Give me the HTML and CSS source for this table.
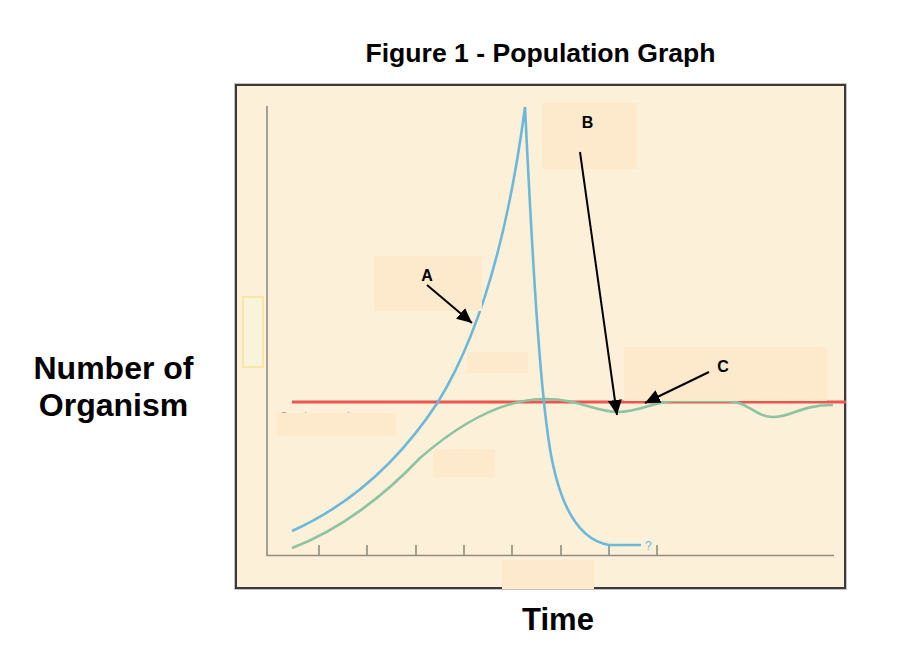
FILE: index.html
```html
<!DOCTYPE html>
<html lang="en">
<head>
<meta charset="utf-8">
<title>Figure 1 - Population Graph</title>
<link rel="stylesheet" href="styles.css">
</head>
<body>
<div class="page">
  <h1 class="title">Figure 1 - Population Graph</h1>
  <div class="ylabel">Number of<br>Organism</div>
  <div class="frame">
    <svg class="chart" width="607" height="501" viewBox="237 86 607 501" xmlns="http://www.w3.org/2000/svg">
      <defs>
        <marker id="head" markerUnits="userSpaceOnUse" markerWidth="16" markerHeight="14" refX="15" refY="7" orient="auto">
          <path d="M0,0 L15,7 L0,14 z" class="head"/>
        </marker>
      </defs>
      <!-- axes -->
      <path class="axis" d="M267,106 V555.5 H834"/>
      <path class="axis" d="M319,545 V555 M367,545 V555 M416,545 V555 M464,545 V555 M512,545 V555 M561,545 V555 M609,545 V555 M657,545 V555"/>
      <!-- faint label under box -->
      <text class="faint" x="280" y="420">Carrying capacity</text>
      <!-- carrying capacity line -->
      <path class="red" d="M292,402 H846"/>
      <!-- green logistic curve -->
      <path class="green" d="M292,548 C340,530 385,495 420,458 C458,425 500,399 545,399 C580,399 595,412 618,412 C640,412 655,401 675,401 L727,401 C748,401 755,417 773,417 C792,417 800,405 833,405"/>
      <!-- blue exponential curve -->
      <path class="blue" d="M292,531 C350,505 400,460 438,402 C470,350 505,260 525,107 C532,250 540,400 552,460 C562,510 580,540 609,545 L641,545"/>
      <text class="qmark" x="645" y="550">?</text>
      <!-- label boxes -->
      <rect class="box" x="374" y="256" width="108" height="55"/>
      <rect class="box" x="542" y="103" width="95" height="66"/>
      <rect class="box" x="624" y="347" width="203" height="54"/>
      <rect class="box" x="467" y="352" width="61" height="21"/>
      <rect class="box" x="277" y="413" width="119" height="23"/>
      <rect class="box" x="433" y="449" width="62" height="28"/>
      <rect class="box" x="502" y="560" width="92" height="29"/>
      <rect class="ybox" x="243" y="297" width="20" height="70"/>
      <!-- letters -->
      <text class="letter" x="427" y="281">A</text>
      <text class="letter" x="587.5" y="128">B</text>
      <text class="letter" x="723" y="372">C</text>
      <!-- arrows -->
      <path class="arrow" d="M427,285 L472,323"/>
      <path class="arrow" d="M580,152 L617,415"/>
      <path class="arrow" d="M709,372 L645,403"/>
    </svg>
  </div>
  <div class="xlabel">Time</div>
</div>
</body>
</html>
```

FILE: styles.css
```css
html, body {
  margin: 0;
  padding: 0;
  background: #ffffff;
}

body {
  width: 924px;
  height: 670px;
  overflow: hidden;
  font-family: "Liberation Sans", Arial, sans-serif;
  color: #000;
}

.page {
  display: grid;
  grid-template-columns: 235px 611px;
  padding-top: 38px;
}

.title {
  grid-column: 2;
  grid-row: 1;
  margin: 0 0 16px;
  font-size: 26.6px;
  line-height: 30px;
  font-weight: bold;
  text-align: center;
}

.ylabel {
  grid-column: 1;
  grid-row: 2;
  align-self: start;
  margin-top: 266px;
  padding-right: 8px;
  font-size: 32px;
  line-height: 37px;
  font-weight: bold;
  text-align: center;
}

.frame {
  grid-column: 2;
  grid-row: 2;
  width: 611px;
  height: 505px;
  box-sizing: border-box;
  border: 2px solid #3a3a3a;
  box-shadow: 0 0 0 1px #c4c4c4;
  background: #fdf0d9;
}

.chart {
  display: block;
  overflow: visible;
}

.xlabel {
  grid-column: 2;
  grid-row: 3;
  margin-top: 13px;
  padding-left: 35px;
  font-size: 31px;
  line-height: 36px;
  font-weight: bold;
  text-align: center;
}

.axis {
  fill: none;
  stroke: #8e8c84;
  stroke-width: 1.6;
}

.red {
  fill: none;
  stroke: #ea5550;
  stroke-width: 3;
}

.green {
  fill: none;
  stroke: #8dc3a0;
  stroke-width: 2.6;
}

.blue {
  fill: none;
  stroke: #6cb8da;
  stroke-width: 2.6;
}

.qmark {
  fill: #6cb8da;
  font-size: 12px;
  font-family: "Liberation Sans", Arial, sans-serif;
}

.faint {
  fill: #9a968e;
  font-size: 10px;
  font-family: "Liberation Sans", Arial, sans-serif;
}

.box {
  fill: #fdeacd;
}

.ybox {
  fill: #f9f3dc;
  stroke: #f6e8a4;
  stroke-width: 2;
}

.letter {
  fill: #000;
  font-size: 16px;
  font-weight: bold;
  text-anchor: middle;
  font-family: "Liberation Sans", Arial, sans-serif;
}

.arrow {
  fill: none;
  stroke: #000;
  stroke-width: 2;
  marker-end: url(#head);
}

.head {
  fill: #000;
}
```
